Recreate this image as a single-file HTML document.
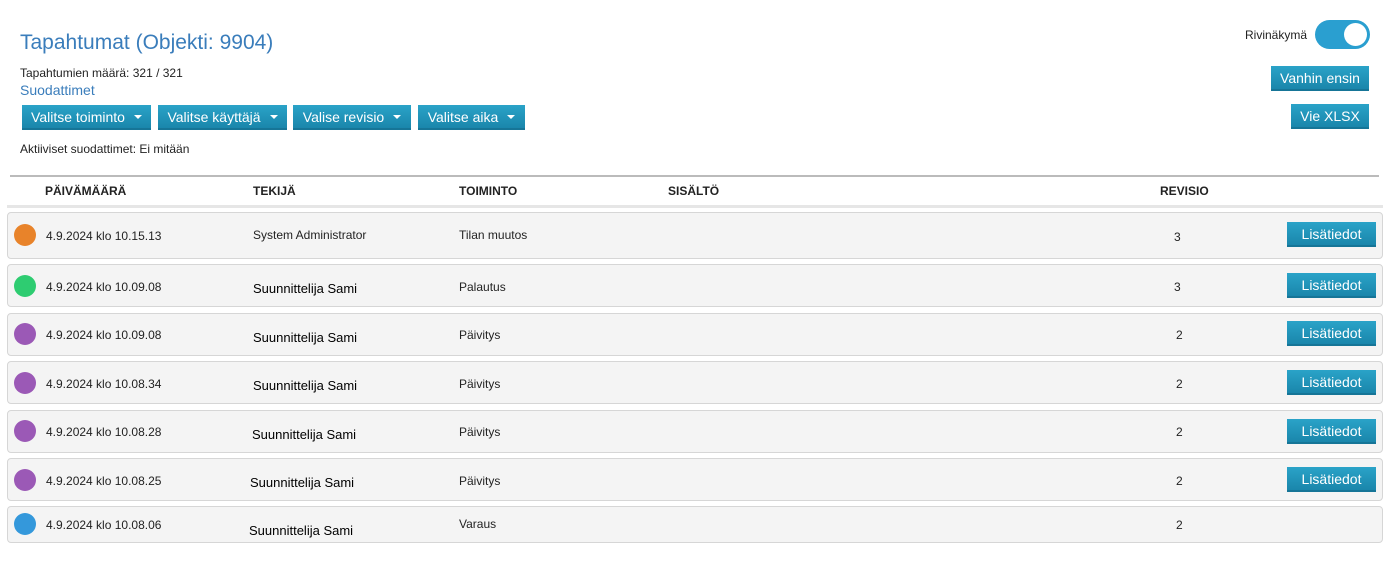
<!DOCTYPE html>
<html><head><meta charset="utf-8"><style>
body{margin:0;width:1391px;height:585px;background:#fff;font-family:"Liberation Sans",Arial,sans-serif;position:relative;overflow:hidden;color:#222}
.a{position:absolute;white-space:nowrap}
.btn{position:absolute;background:linear-gradient(#2aa3c8,#1a86ab);color:#fff;font-size:14px;display:flex;align-items:center;justify-content:center;box-sizing:border-box;border-bottom:2px solid #167597}
.car{display:inline-block;width:0;height:0;border-left:4px solid transparent;border-right:4px solid transparent;border-top:4px solid #fff;margin-left:9px;vertical-align:middle}
.row{position:absolute;left:7px;width:1376px;background:#f4f4f4;border:1px solid #d6d6d6;border-radius:4px;box-sizing:border-box}
.dot{position:absolute;left:6px;width:22px;height:22px;border-radius:50%}
.t{position:absolute;font-size:12px;color:#222}
.h{position:absolute;top:184px;font-size:12px;font-weight:bold;color:#222}
</style></head><body>
<div class="a" style="left:20px;top:31px;font-size:21px;color:#3a7dbb">Tapahtumat (Objekti: 9904)</div>
<div class="a" style="left:20px;top:66px;font-size:12px">Tapahtumien määrä: 321 / 321</div>
<div class="a" style="left:20px;top:82px;font-size:14px;color:#3a7dbb">Suodattimet</div>
<div class="btn" style="left:22px;top:105px;width:129px;height:25px">Valitse toiminto<span class="car"></span></div>
<div class="btn" style="left:158px;top:105px;width:129px;height:25px">Valitse käyttäjä<span class="car"></span></div>
<div class="btn" style="left:293px;top:105px;width:118px;height:25px">Valise revisio<span class="car"></span></div>
<div class="btn" style="left:418px;top:105px;width:107px;height:25px">Valitse aika<span class="car"></span></div>
<div class="a" style="left:20px;top:142px;font-size:12px">Aktiiviset suodattimet: Ei mitään</div>
<div class="a" style="left:1245px;top:28px;font-size:12px">Rivinäkymä</div>
<div class="a" style="left:1315px;top:20px;width:55px;height:29px;border-radius:15px;background:#2a9fd0"><div style="position:absolute;right:3px;top:3px;width:23px;height:23px;border-radius:50%;background:#fff"></div></div>
<div class="btn" style="left:1271px;top:66px;width:98px;height:25px">Vanhin ensin</div>
<div class="btn" style="left:1291px;top:104px;width:78px;height:25px">Vie XLSX</div>
<div class="a" style="left:10px;top:175px;width:1369px;height:2px;background:#bbb"></div>
<div class="h" style="left:45px">PÄIVÄMÄÄRÄ</div>
<div class="h" style="left:253px">TEKIJÄ</div>
<div class="h" style="left:459px">TOIMINTO</div>
<div class="h" style="left:668px">SISÄLTÖ</div>
<div class="h" style="left:1160px">REVISIO</div>
<div class="a" style="left:7px;top:205px;width:1376px;height:3px;background:#e6e6e6"></div>

<div class="row" style="top:212px;height:47px"><div class="dot" style="top:11px;background:#e8832a"></div><div class="t" style="left:38px;top:16px">4.9.2024 klo 10.15.13</div><div class="t" style="left:245px;top:15px">System Administrator</div><div class="t" style="left:451px;top:15px">Tilan muutos</div><div class="t" style="left:1166px;top:17px">3</div><div class="btn" style="left:1279px;top:9px;width:89px;height:25px">Lisätiedot</div></div>
<div class="row" style="top:264px;height:43px"><div class="dot" style="top:10px;background:#2ecc71"></div><div class="t" style="left:38px;top:15px">4.9.2024 klo 10.09.08</div><div class="t" style="left:245px;top:16px;font-size:13px;color:#000">Suunnittelija Sami</div><div class="t" style="left:451px;top:15px">Palautus</div><div class="t" style="left:1166px;top:15px">3</div><div class="btn" style="left:1279px;top:8px;width:89px;height:25px">Lisätiedot</div></div>
<div class="row" style="top:313px;height:43px"><div class="dot" style="top:9px;background:#9b59b6"></div><div class="t" style="left:38px;top:14px">4.9.2024 klo 10.09.08</div><div class="t" style="left:245px;top:16px;font-size:13px;color:#000">Suunnittelija Sami</div><div class="t" style="left:451px;top:14px">Päivitys</div><div class="t" style="left:1168px;top:14px">2</div><div class="btn" style="left:1279px;top:7px;width:89px;height:25px">Lisätiedot</div></div>
<div class="row" style="top:361px;height:43px"><div class="dot" style="top:10px;background:#9b59b6"></div><div class="t" style="left:38px;top:15px">4.9.2024 klo 10.08.34</div><div class="t" style="left:245px;top:16px;font-size:13px;color:#000">Suunnittelija Sami</div><div class="t" style="left:451px;top:15px">Päivitys</div><div class="t" style="left:1168px;top:15px">2</div><div class="btn" style="left:1279px;top:8px;width:89px;height:25px">Lisätiedot</div></div>
<div class="row" style="top:410px;height:43px"><div class="dot" style="top:9px;background:#9b59b6"></div><div class="t" style="left:38px;top:14px">4.9.2024 klo 10.08.28</div><div class="t" style="left:244px;top:16px;font-size:13px;color:#000">Suunnittelija Sami</div><div class="t" style="left:451px;top:14px">Päivitys</div><div class="t" style="left:1168px;top:14px">2</div><div class="btn" style="left:1279px;top:8px;width:89px;height:25px">Lisätiedot</div></div>
<div class="row" style="top:458px;height:43px"><div class="dot" style="top:10px;background:#9b59b6"></div><div class="t" style="left:38px;top:15px">4.9.2024 klo 10.08.25</div><div class="t" style="left:242px;top:16px;font-size:13px;color:#000">Suunnittelija Sami</div><div class="t" style="left:451px;top:15px">Päivitys</div><div class="t" style="left:1168px;top:15px">2</div><div class="btn" style="left:1279px;top:8px;width:89px;height:25px">Lisätiedot</div></div>
<div class="row" style="top:506px;height:37px"><div class="dot" style="top:6px;background:#3498db"></div><div class="t" style="left:38px;top:11px">4.9.2024 klo 10.08.06</div><div class="t" style="left:241px;top:16px;font-size:13px;color:#000">Suunnittelija Sami</div><div class="t" style="left:451px;top:10px">Varaus</div><div class="t" style="left:1168px;top:11px">2</div></div>
</body></html>
